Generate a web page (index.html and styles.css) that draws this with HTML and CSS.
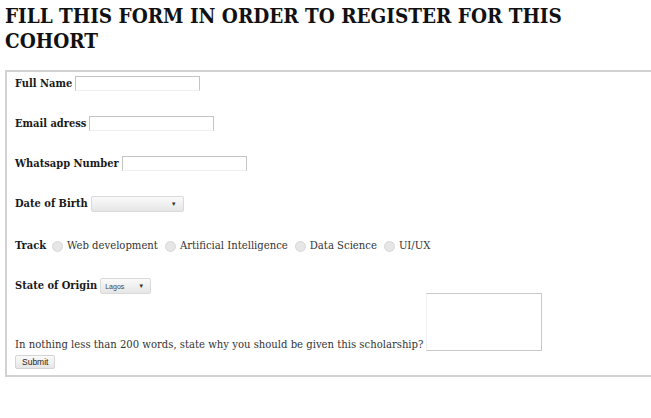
FILE: index.html
```html
<!DOCTYPE html>
<html>
<head>
<meta charset="utf-8">
<link rel="stylesheet" href="styles.css">
</head>
<body>
<h1 class="title">FILL THIS FORM IN ORDER TO REGISTER FOR THIS COHORT</h1>
<form class="form">
  <fieldset class="box">
    <div class="row"><label class="lbl">Full Name</label><input class="txt" type="text"></div>
    <div class="row"><label class="lbl">Email adress</label><input class="txt" type="text"></div>
    <div class="row"><label class="lbl">Whatsapp Number</label><input class="txt" type="text"></div>
    <div class="row row-dob"><label class="lbl">Date of Birth</label><span class="sel sel-dob"><span class="arrow">▼</span></span></div>
    <div class="row"><label class="lbl">Track</label>
      <span class="radio"></span><span class="opt">Web development</span>
      <span class="radio"></span><span class="opt">Artificial Intelligence</span>
      <span class="radio"></span><span class="opt">Data Science</span>
      <span class="radio"></span><span class="opt">UI/UX</span>
    </div>
    <div class="row row-last"><label class="lbl">State of Origin</label><span class="sel sel-state"><span class="seltext">Lagos</span><span class="arrow">▼</span></span></div>
    <div class="row-essay"><span class="q">In nothing less than 200 words, state why you should be given this scholarship?</span><span class="area"></span></div>
    <div class="row-submit"><span class="btn">Submit</span></div>
  </fieldset>
</form>
</body>
</html>
```
FILE: styles.css
```css
html, body {
  margin: 0;
  padding: 0;
  background: #fff;
  overflow: hidden;
}
body {
  padding: 4px 0 0 5px;
  font-family: "DejaVu Serif Condensed", "DejaVu Serif", serif;
  font-stretch: condensed;
  color: #222;
  width: 720px;
}
.title {
  margin: 0;
  font-size: 20.5px;
  line-height: 25px;
  font-weight: bold;
  color: #111;
  width: 600px;
}
.form {
  margin-top: 16px;
}
.box {
  margin: 0;
  border: 2px solid #d2d2d2;
  padding: 4px 8px 6px 8px;
  width: 700px;
  box-sizing: border-box;
  font-size: 11.2px;
  display: flex;
  flex-direction: column;
  align-items: flex-start;
}
.row {
  height: 40px;
  display: flex;
  align-items: flex-start;
  gap: 3px;
}
.row-dob { height: 42px; }
.row-last { height: 15px; }
.lbl {
  font-weight: bold;
  font-size: 11px;
  color: #1a1a1a;
  line-height: 16px;
}
.txt {
  box-sizing: border-box;
  width: 125px;
  height: 15px;
  margin: 0;
  padding: 0;
  border: 1px solid #c4c4c4;
  border-bottom-color: #f0f0f0;
}
.sel {
  box-sizing: border-box;
  display: inline-flex;
  align-items: center;
  justify-content: space-between;
  height: 16px;
  border: 1px solid #dadada;
  border-radius: 2px;
  background: linear-gradient(#fafafa, #e6e6e6);
  padding: 0 6px 0 4px;
  font-family: "Liberation Sans", Arial, sans-serif;
  font-stretch: normal;
  font-size: 7px;
  color: #444;
}
.sel-dob { width: 93px; justify-content: flex-end; }
.sel-state { width: 51px; }
.arrow { font-size: 6px; color: #333; }
.radio {
  width: 11px;
  height: 11px;
  border-radius: 50%;
  background: #e6e6e6;
  border: 1px solid #d8d8d8;
  box-sizing: border-box;
  margin: 3px 1px 0 3px;
}
.opt { color: #333; line-height: 16px; margin-right: 1px; }
.row-essay {
  display: flex;
  align-items: flex-end;
  gap: 3px;
  color: #333;
}
.q { line-height: 12px; }
.area {
  box-sizing: border-box;
  width: 116px;
  height: 58px;
  border: 1px solid #c8c8c8;
  border-left-color: #f0f0f0;
}
.row-submit { margin-top: 4px; }
.btn {
  display: inline-block;
  box-sizing: border-box;
  height: 14px;
  padding: 0 6px;
  border: 1px solid #d4d4d4;
  border-radius: 2px;
  background: linear-gradient(#fafafa, #e6e6e6);
  font-family: "Liberation Sans", Arial, sans-serif;
  font-stretch: normal;
  font-size: 8.5px;
  line-height: 12px;
  color: #222;
}
```
